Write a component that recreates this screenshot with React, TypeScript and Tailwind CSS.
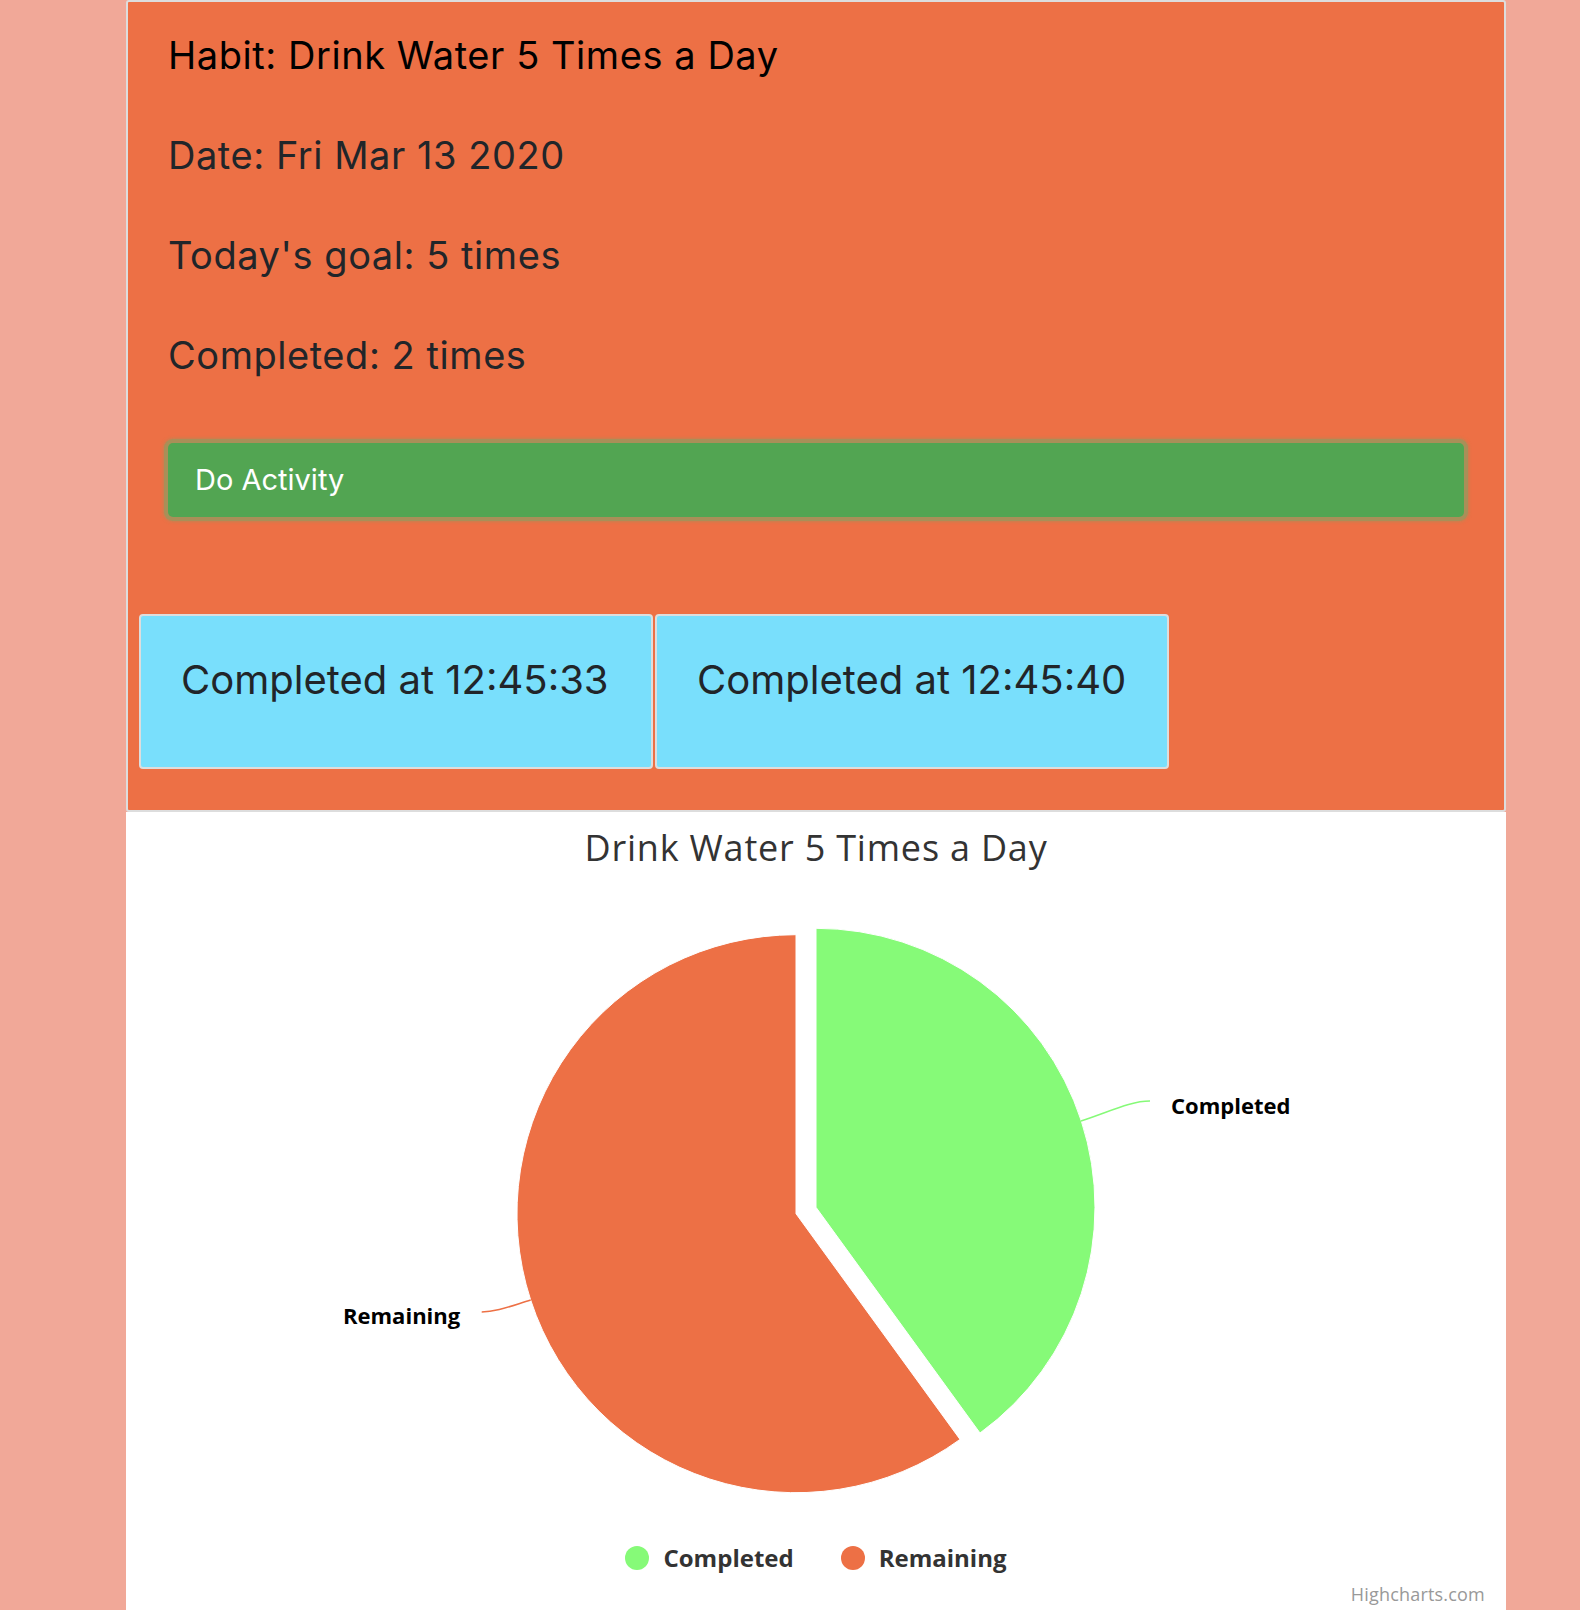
export default function App() {
  const times = ["12:45:33", "12:45:40"]

  return (
    <div className="min-h-[1610px] bg-[#f1a898]">
      <div className="ml-[126px] w-[1380px]">
        {/* Habit card */}
        <div className="rounded-[3px] border-2 border-[#dddddd] bg-[#ed7045] pt-[3px] pb-[41px] font-['Inter',sans-serif]">
          <div className="pl-[40px] text-[38px] tracking-[0.55px]">
            <p className="flex h-[100px] items-center text-black">Habit: Drink Water 5 Times a Day</p>
            <p className="flex h-[100px] items-center text-[#212529]">Date: Fri Mar 13 2020</p>
            <p className="flex h-[100px] items-center text-[#212529]">Today's goal: 5 times</p>
            <p className="flex h-[100px] items-center text-[#212529]">Completed: 2 times</p>
          </div>

          {/* Do Activity button */}
          <div className="mt-[38px] px-[40px]">
            <button className="flex h-[74px] w-full items-center rounded-[5px] bg-[#52a552] pl-[27px] text-[29px] text-white shadow-[0_0_0_4px_#a98f58,0_0_3px_5px_rgba(169,143,88,0.6)]">
              Do Activity
            </button>
          </div>

          {/* Completion log */}
          <div className="mt-[97px] flex gap-[2px] pl-[11px]">
            {times.map((t) => (
              <div
                key={t}
                className="h-[155px] w-[514px] rounded-[4px] border-2 border-[#dddddd] bg-[#79dffc] pt-[40px] pl-[40px] text-[40px] leading-[48px] text-[#212529]"
              >
                Completed at {t}
              </div>
            ))}
          </div>
        </div>

        {/* Chart */}
        <div className="flex h-[798px] flex-col bg-white font-['Open_Sans',sans-serif]">
          <h2 className="pt-[16px] text-center text-[36px] leading-[40px] tracking-[0.8px] text-[#333333]">
            Drink Water 5 Times a Day
          </h2>

          <svg width="1380" height="656" viewBox="0 0 1380 656" className="block">
            {/* Completed slice */}
            <path d="M690 339.3 L690 60.3 A279 279 0 0 1 854 565 Z" fill="#86fa78" stroke="#ffffff" strokeWidth="1" />
            {/* Remaining slice */}
            <path d="M670 345.7 L834 571.4 A279 279 0 1 1 670 66.7 Z" fill="#ed7045" stroke="#ffffff" strokeWidth="1" />

            {/* connectors */}
            <path d="M955 253 C 985 243, 1005 233, 1024 233" fill="none" stroke="#86fa78" strokeWidth="1.5" />
            <path d="M404.7 432 C 385 438, 370 444, 355.7 444" fill="none" stroke="#ed7045" strokeWidth="1.5" />

            <text x="1045" y="246" className="fill-black text-[22px] font-bold">
              Completed
            </text>
            <text x="217" y="456" className="fill-black text-[22px] font-bold">
              Remaining
            </text>
          </svg>

          {/* Legend */}
          <div className="mt-[22px] flex h-[24px] items-center justify-center gap-[47px] text-[24px] font-bold text-[#333333]">
            <div className="flex items-center gap-[14px]">
              <span className="h-[24px] w-[24px] rounded-full bg-[#86fa78]" />
              <span>Completed</span>
            </div>
            <div className="flex items-center gap-[14px]">
              <span className="h-[24px] w-[24px] rounded-full bg-[#ed7045]" />
              <span>Remaining</span>
            </div>
          </div>

          <div className="mt-[14px] flex justify-end pr-[21px] text-[18px] leading-[20px] tracking-[0.2px] text-[#999999]">
            Highcharts.com
          </div>
        </div>
      </div>
    </div>
  )
}
